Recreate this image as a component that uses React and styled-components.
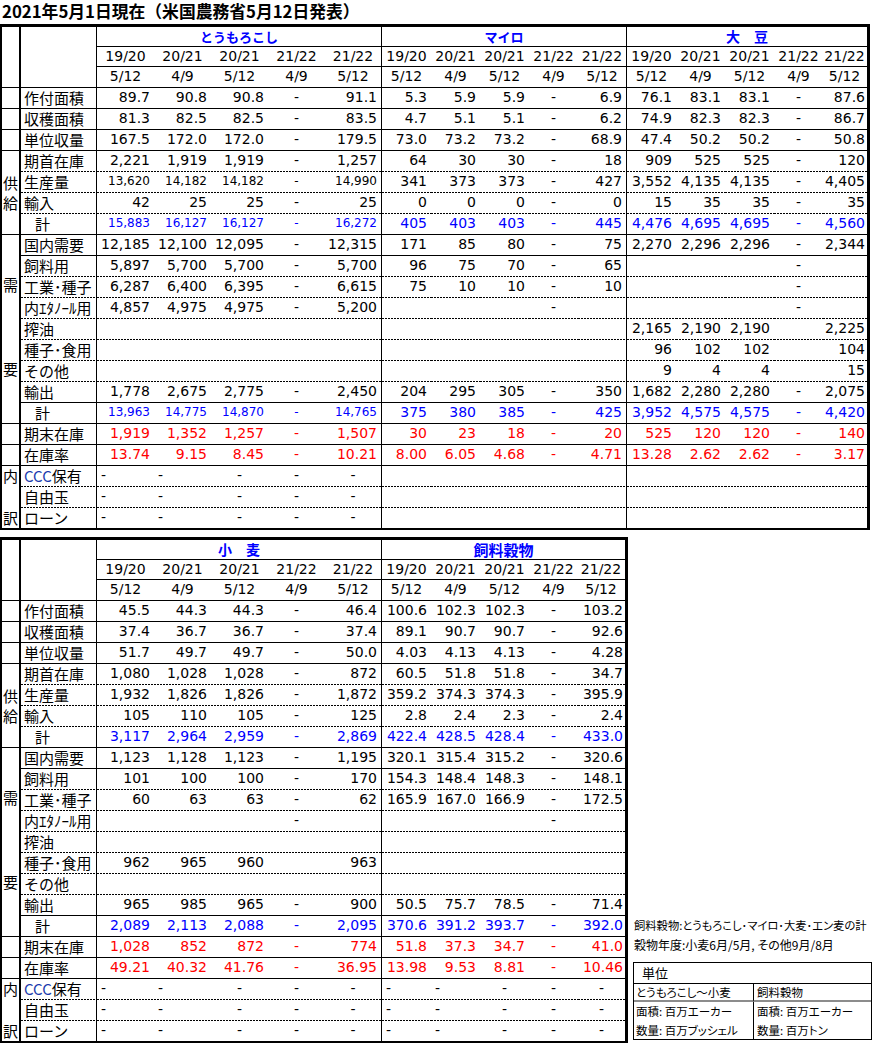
import React from 'react';
import styled, { createGlobalStyle, css } from 'styled-components';

const BLUE = '#0000ff';
const RED = '#ff0000';
const NUM_FONT = '"DejaVu Sans", "Noto Sans CJK JP", sans-serif';
const JP_FONT = '"Noto Sans CJK JP", "DejaVu Sans", sans-serif';

const GlobalStyle = createGlobalStyle`
  html, body { margin: 0; padding: 0; background: #fff; }
  body { font-family: ${NUM_FONT}; color: #000; }
`;

const Page = styled.div`
  width: 873px;
  height: 1043px;
  overflow: hidden;
`;

const Title = styled.h1`
  margin: 0;
  height: 24px;
  padding-left: 2px;
  font-family: ${JP_FONT};
  font-size: 16.8px;
  font-weight: 700;
  line-height: 23px;
  white-space: nowrap;
`;

const Sheet = styled.div`
  display: grid;
  grid-template-columns: ${p => p.$cols.map(c => `${c}px`).join(' ')};
  grid-template-rows: ${p => p.$rows.map(r => `${r}px`).join(' ')};
  width: max-content;
  border-top: 3px solid #000;
  border-left: 2px solid #000;
  border-right: 3px solid #000;
  border-bottom: 2px solid #000;
`;

const dashedLine = css`
  background-image: linear-gradient(to right, #000 2px, transparent 2px);
  background-size: 3px 1px;
  background-repeat: repeat-x;
  background-position: left bottom;
`;

const cellBase = css`
  box-sizing: border-box;
  min-width: 0;
  white-space: nowrap;
  overflow: hidden;
  line-height: 19px;
  grid-row: ${p => (p.$rowSpan ? `span ${p.$rowSpan}` : 'auto')};
  grid-column: ${p => (p.$colSpan ? `span ${p.$colSpan}` : 'auto')};
  border-right: ${p => (p.$edge ? '1px solid #000' : 'none')};
  border-bottom: ${p => (p.$line === 'solid' ? '1px solid #000' : 'none')};
  ${p => p.$line === 'dashed' && dashedLine}
`;

const SideCell = styled.div`
  ${cellBase}
  border-right: 2px solid #000;
  font-family: ${JP_FONT};
  font-size: 15px;
  line-height: 20px;
  display: flex;
  flex-direction: column;
  align-items: center;
  justify-content: ${p => (p.$spread ? 'space-between' : 'center')};
  padding: ${p => p.$pad || '0'};
`;

const LabelCell = styled.div`
  ${cellBase}
  border-right: 1px solid #000;
  font-family: ${JP_FONT};
  font-size: 15px;
  padding-left: ${p => (p.$indent ? 14 : 3)}px;
`;

const Latin = styled.span`
  color: #1d3cae;
`;

const CropCell = styled.div`
  ${cellBase}
  text-align: center;
  font-family: ${JP_FONT};
  font-weight: 700;
  font-size: ${p => p.$size}px;
  color: ${BLUE};
`;

const YearCell = styled.div`
  ${cellBase}
  text-align: center;
  font-size: 14px;
  line-height: 18px;
  padding-right: ${p => p.$pr}px;
`;

const NumCell = styled.div`
  ${cellBase}
  font-size: ${p => (p.$small ? 12 : 14)}px;
  color: ${p => (p.$tone === 'blue' ? BLUE : p.$tone === 'red' ? RED : '#000')};
  text-align: ${p => p.$align};
  padding-left: ${p => p.$pl}px;
  padding-right: ${p => p.$pr}px;
`;

const Lower = styled.div`
  display: flex;
  align-items: flex-end;
  margin-top: 7px;
`;

const Notes = styled.aside`
  margin-left: 5px;
  width: 239px;
  padding-bottom: 3px;
  font-family: ${JP_FONT};
  font-feature-settings: "palt";
`;

const NoteLine = styled.div`
  height: 20px;
  line-height: 20px;
  font-size: ${p => p.$size}px;
  padding-left: 1px;
  white-space: nowrap;
`;

const UnitBox = styled.div`
  box-sizing: border-box;
  margin-top: 7px;
  border: 1px solid #000;
  display: grid;
  grid-template-columns: 120px 1fr;
  font-size: 11.5px;
  white-space: nowrap;
`;

const UnitTitle = styled.div`
  grid-column: 1 / -1;
  height: 20px;
  line-height: 20px;
  border-bottom: 1px solid #000;
  padding-left: 8px;
  font-size: 13px;
`;

const UnitHead = styled.div`
  height: 16px;
  line-height: 16px;
  border-bottom: 2px solid #8c8c8c;
  border-right: ${p => (p.$right ? 'none' : '1px solid #000')};
  padding-left: ${p => (p.$right ? 3 : 2)}px;
`;

const UnitBody = styled.div`
  padding: 0 0 0 ${p => (p.$right ? 3 : 2)}px;
  border-right: ${p => (p.$right ? 'none' : '1px solid #000')};
  line-height: 18.5px;
`;

const YEARS = ['19/20', '20/21', '20/21', '21/22', '21/22'];
const DATES = ['5/12', '4/9', '5/12', '4/9', '5/12'];

const ROWS = [
  { label: '作付面積', line: 'solid' },
  { label: '収穫面積', line: 'solid' },
  { label: '単位収量', line: 'solid' },
  { label: '期首在庫', line: 'dashed' },
  { label: '生産量', line: 'dashed' },
  { label: '輸入', line: 'dashed' },
  { label: '計', line: 'solid', indent: true, tone: 'blue' },
  { label: '国内需要', line: 'solid' },
  { label: '飼料用', line: 'dashed' },
  { label: '工業･種子', line: 'dashed' },
  { label: '内ｴﾀﾉｰﾙ用', line: 'dashed' },
  { label: '搾油', line: 'dashed' },
  { label: '種子･食用', line: 'dashed' },
  { label: 'その他', line: 'dashed' },
  { label: '輸出', line: 'solid' },
  { label: '計', line: 'solid', indent: true, tone: 'blue' },
  { label: '期末在庫', line: 'solid', tone: 'red' },
  { label: '在庫率', line: 'solid', tone: 'red' },
  { label: 'CCC保有', line: 'dashed', reserve: true, latin: 'CCC' },
  { label: '自由玉', line: 'dashed', reserve: true },
  { label: 'ローン', line: 'none', reserve: true },
];

const ROW_HEIGHTS = [20, 20, 21, ...ROWS.map((_, i) => (i === ROWS.length - 1 ? 20 : 21))];

const SIDE = {
  0: { span: 1 },
  1: { span: 1 },
  2: { span: 1 },
  3: { span: 4, chars: ['供', '給'] },
  7: { span: 9, chars: ['需', '要'], pad: '40px 0 44px', spread: true },
  16: { span: 1 },
  17: { span: 1 },
  18: { span: 3, chars: ['内', '訳'], spread: true },
};

const E = ['', '', '', '', ''];
const D4 = ['', '', '', '-', ''];

const CORN = {
  name: 'とうもろこし', size: 13, reserve: true, small: [4, 6, 15],
  values: [
    ['89.7', '90.8', '90.8', '-', '91.1'],
    ['81.3', '82.5', '82.5', '-', '83.5'],
    ['167.5', '172.0', '172.0', '-', '179.5'],
    ['2,221', '1,919', '1,919', '-', '1,257'],
    ['13,620', '14,182', '14,182', '-', '14,990'],
    ['42', '25', '25', '-', '25'],
    ['15,883', '16,127', '16,127', '-', '16,272'],
    ['12,185', '12,100', '12,095', '-', '12,315'],
    ['5,897', '5,700', '5,700', '-', '5,700'],
    ['6,287', '6,400', '6,395', '-', '6,615'],
    ['4,857', '4,975', '4,975', '-', '5,200'],
    E, E, E,
    ['1,778', '2,675', '2,775', '-', '2,450'],
    ['13,963', '14,775', '14,870', '-', '14,765'],
    ['1,919', '1,352', '1,257', '-', '1,507'],
    ['13.74', '9.15', '8.45', '-', '10.21'],
  ],
};

const MILO = {
  name: 'マイロ', size: 13, reserve: false,
  values: [
    ['5.3', '5.9', '5.9', '-', '6.9'],
    ['4.7', '5.1', '5.1', '-', '6.2'],
    ['73.0', '73.2', '73.2', '-', '68.9'],
    ['64', '30', '30', '-', '18'],
    ['341', '373', '373', '-', '427'],
    ['0', '0', '0', '-', '0'],
    ['405', '403', '403', '-', '445'],
    ['171', '85', '80', '-', '75'],
    ['96', '75', '70', '-', '65'],
    ['75', '10', '10', '-', '10'],
    D4, E, E, E,
    ['204', '295', '305', '-', '350'],
    ['375', '380', '385', '-', '425'],
    ['30', '23', '18', '-', '20'],
    ['8.00', '6.05', '4.68', '-', '4.71'],
  ],
};

const SOY = {
  name: '大　豆', size: 14, reserve: false,
  values: [
    ['76.1', '83.1', '83.1', '-', '87.6'],
    ['74.9', '82.3', '82.3', '-', '86.7'],
    ['47.4', '50.2', '50.2', '-', '50.8'],
    ['909', '525', '525', '-', '120'],
    ['3,552', '4,135', '4,135', '-', '4,405'],
    ['15', '35', '35', '-', '35'],
    ['4,476', '4,695', '4,695', '-', '4,560'],
    ['2,270', '2,296', '2,296', '-', '2,344'],
    D4, D4, D4,
    ['2,165', '2,190', '2,190', '', '2,225'],
    ['96', '102', '102', '', '104'],
    ['9', '4', '4', '', '15'],
    ['1,682', '2,280', '2,280', '-', '2,075'],
    ['3,952', '4,575', '4,575', '-', '4,420'],
    ['525', '120', '120', '-', '140'],
    ['13.28', '2.62', '2.62', '-', '3.17'],
  ],
};

const WHEAT = {
  name: '小　麦', size: 14, reserve: true,
  values: [
    ['45.5', '44.3', '44.3', '-', '46.4'],
    ['37.4', '36.7', '36.7', '-', '37.4'],
    ['51.7', '49.7', '49.7', '-', '50.0'],
    ['1,080', '1,028', '1,028', '-', '872'],
    ['1,932', '1,826', '1,826', '-', '1,872'],
    ['105', '110', '105', '-', '125'],
    ['3,117', '2,964', '2,959', '-', '2,869'],
    ['1,123', '1,128', '1,123', '-', '1,195'],
    ['101', '100', '100', '-', '170'],
    ['60', '63', '63', '-', '62'],
    D4, E,
    ['962', '965', '960', '', '963'],
    E,
    ['965', '985', '965', '-', '900'],
    ['2,089', '2,113', '2,088', '-', '2,095'],
    ['1,028', '852', '872', '-', '774'],
    ['49.21', '40.32', '41.76', '-', '36.95'],
  ],
};

const FEED = {
  name: '飼料穀物', size: 15, reserve: true,
  values: [
    ['100.6', '102.3', '102.3', '-', '103.2'],
    ['89.1', '90.7', '90.7', '-', '92.6'],
    ['4.03', '4.13', '4.13', '-', '4.28'],
    ['60.5', '51.8', '51.8', '-', '34.7'],
    ['359.2', '374.3', '374.3', '-', '395.9'],
    ['2.8', '2.4', '2.3', '-', '2.4'],
    ['422.4', '428.5', '428.4', '-', '433.0'],
    ['320.1', '315.4', '315.2', '-', '320.6'],
    ['154.3', '148.4', '148.3', '-', '148.1'],
    ['165.9', '167.0', '166.9', '-', '172.5'],
    D4, E, E, E,
    ['50.5', '75.7', '78.5', '-', '71.4'],
    ['370.6', '391.2', '393.7', '-', '392.0'],
    ['51.8', '37.3', '34.7', '-', '41.0'],
    ['13.98', '9.53', '8.81', '-', '10.46'],
  ],
};

const COLS_IDX = [0, 1, 2, 3, 4];

function SheetGrid({ crops, cols }) {
  const last = crops.length - 1;
  const cells = [];

  cells.push(<SideCell key="sh" $rowSpan={3} $line="solid" />);
  cells.push(<LabelCell key="lh" $rowSpan={3} $line="solid" />);
  crops.forEach((c, ci) => {
    cells.push(
      <CropCell key={`c${ci}`} $colSpan={5} $line="solid" $edge={ci < last} $size={c.size}>
        {c.name}
      </CropCell>
    );
  });
  [YEARS, DATES].forEach((labels, li) => {
    crops.forEach((c, ci) => {
      labels.forEach((t, i) => {
        cells.push(
          <YearCell
            key={`y${li}-${ci}-${i}`}
            $line="solid"
            $edge={i === 4 && ci < last}
            $pr={i === 4 && ci === last ? 1 : 0}
          >
            {t}
          </YearCell>
        );
      });
    });
  });

  ROWS.forEach((r, ri) => {
    const side = SIDE[ri];
    if (side) {
      const isLast = ri + side.span === ROWS.length;
      cells.push(
        <SideCell
          key={`s${ri}`}
          $rowSpan={side.span}
          $line={isLast ? 'none' : 'solid'}
          $pad={side.pad}
          $spread={side.spread}
        >
          {side.chars && side.chars.map(ch => <span key={ch}>{ch}</span>)}
        </SideCell>
      );
    }
    cells.push(
      <LabelCell key={`l${ri}`} $line={r.line} $indent={r.indent}>
        {r.latin ? (
          <>
            <Latin>{r.latin}</Latin>
            {r.label.slice(r.latin.length)}
          </>
        ) : (
          r.label
        )}
      </LabelCell>
    );
    crops.forEach((c, ci) => {
      COLS_IDX.forEach(i => {
        const tableEnd = i === 4 && ci === last;
        const v = r.reserve ? (c.reserve ? '-' : '') : c.values[ri][i];
        const dash = v === '-';
        const leftDash = r.reserve && i < 2;
        cells.push(
          <NumCell
            key={`n${ri}-${ci}-${i}`}
            $line={r.line}
            $edge={i === 4 && ci < last}
            $tone={r.tone}
            $small={c.small && c.small.includes(ri)}
            $align={dash ? (leftDash ? 'left' : 'center') : 'right'}
            $pl={leftDash ? 4 : 0}
            $pr={dash ? 0 : tableEnd ? 2 : 4}
          >
            {v}
          </NumCell>
        );
      });
    });
  });

  return (
    <Sheet $cols={cols} $rows={ROW_HEIGHTS}>
      {cells}
    </Sheet>
  );
}

export default function App() {
  return (
    <Page>
      <GlobalStyle />
      <Title>2021年5月1日現在（米国農務省5月12日発表）</Title>
      <SheetGrid
        crops={[CORN, MILO, SOY]}
        cols={[19, 76, 57, 57, 57, 57, 57, 49, 49, 49, 49, 49, 49, 49, 49, 49, 44]}
      />
      <Lower>
        <SheetGrid crops={[WHEAT, FEED]} cols={[19, 76, 57, 57, 57, 57, 57, 49, 49, 49, 49, 47]} />
        <Notes>
          <NoteLine $size={11.3}>飼料穀物:とうもろこし･マイロ･大麦･エン麦の計</NoteLine>
          <NoteLine $size={12}>穀物年度:小麦6月/5月, その他9月/8月</NoteLine>
          <UnitBox>
            <UnitTitle>単位</UnitTitle>
            <UnitHead>とうもろこし～小麦</UnitHead>
            <UnitHead $right>飼料穀物</UnitHead>
            <UnitBody>
              <div>面積: 百万エーカー</div>
              <div>数量: 百万ブッシェル</div>
            </UnitBody>
            <UnitBody $right>
              <div>面積: 百万エーカー</div>
              <div>数量: 百万トン</div>
            </UnitBody>
          </UnitBox>
        </Notes>
      </Lower>
    </Page>
  );
}
